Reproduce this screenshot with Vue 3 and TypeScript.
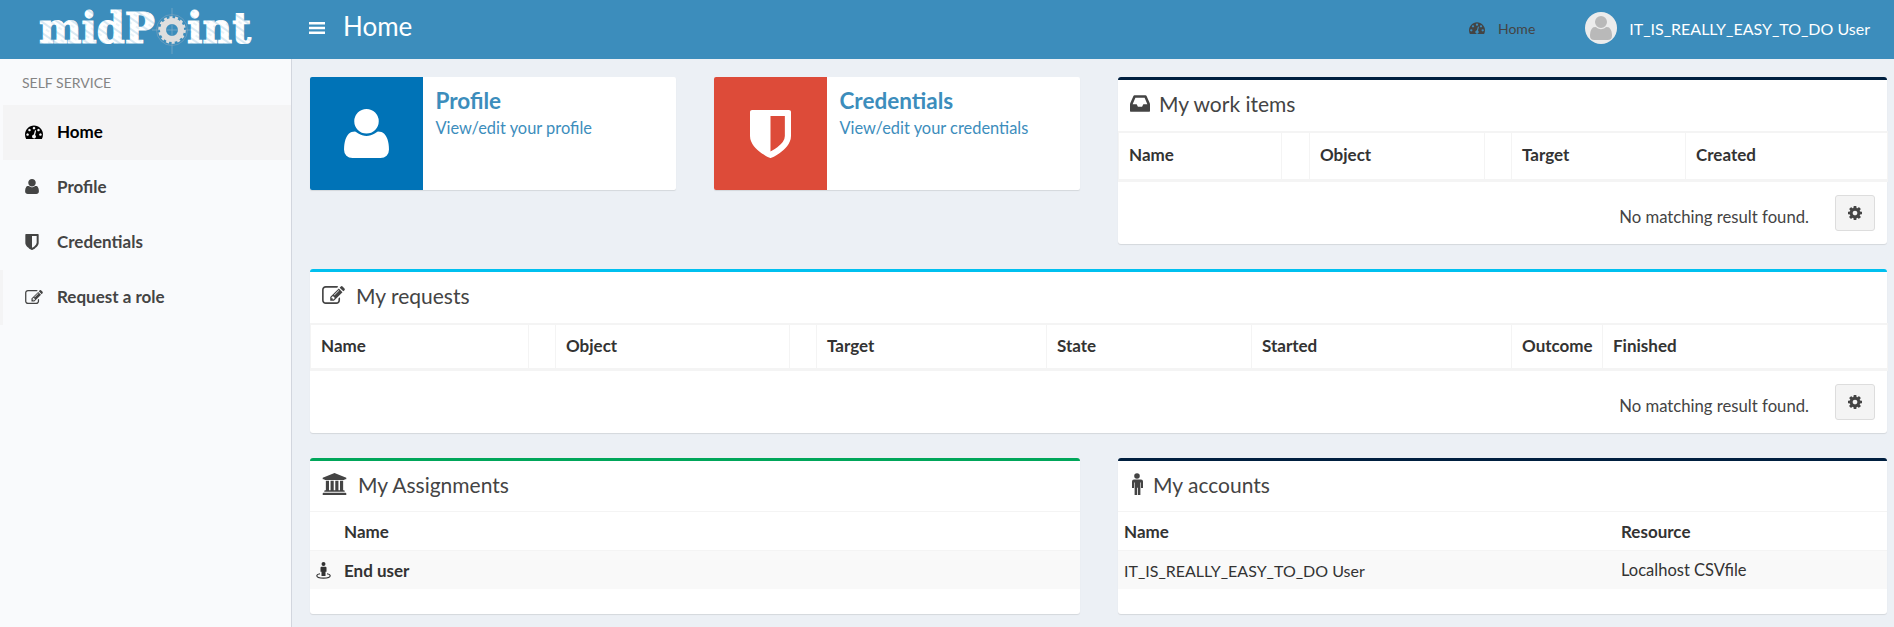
<script setup lang="ts">
const icons = {
  bars: 'M0 3h16v2.4H0zM0 7.8h16v2.4H0zM0 12.6h16V15H0z',
  user: 'M1600 1405q0 120-73 189.500t-194 69.500h-874q-121 0-194-69.500t-73-189.500q0-53 3.500-103.500t14-109 26.500-108.500 43-97.500 62-81 85.500-53.500 111.500-20q9 0 42 21.500t74.500 48 108 48 133.500 21.500 133.500-21.500 108-48 74.500-48 42-21.500q61 0 111.500 20t85.500 53.500 62 81 43 97.500 26.500 108.500 14 109 3.500 103.500zm-320-893q0 159-112.500 271.500t-271.500 112.500-271.500-112.500-112.500-271.500 112.500-271.500 271.500-112.500 271.500 112.500 112.500 271.500z',
  cog: 'M1152 896q0-106-75-181t-181-75-181 75-75 181 75 181 181 75 181-75 75-181zm512-109v222q0 12-8 23t-20 13l-185 28q-19 54-39 91 35 50 107 138 10 12 10 25t-9 23q-27 37-99 108t-94 71q-12 0-26-9l-138-108q-44 23-91 38-16 136-29 186-7 28-36 28h-222q-14 0-24.500-8.500t-11.500-21.500l-28-184q-49-16-90-37l-141 107q-10 9-25 9-14 0-25-11-126-114-165-168-7-10-7-23 0-12 8-23 15-21 51-66.500t54-70.500q-27-50-41-99l-183-27q-13-2-21-12.500t-8-23.500v-222q0-12 8-23t19-13l186-28q14-46 39-92-40-57-107-138-10-12-10-24 0-10 9-23 26-36 98.500-107.500t94.500-71.500q13 0 26 10l138 107q44-23 91-38 16-136 29-186 7-28 36-28h222q14 0 24.500 8.500t11.500 21.500l28 184q49 16 90 37l142-107q9-9 24-9 13 0 25 10 129 119 165 170 7 8 7 22 0 12-8 23-15 21-51 66.500t-54 70.500q26 50 41 98l183 28q13 2 21 12.500t8 23.500z',
  dashboard: 'M384 1152q0-53-37.500-90.500t-90.500-37.500-90.500 37.500-37.500 90.500 37.500 90.500 90.500 37.500 90.500-37.500 37.500-90.500zm192-448q0-53-37.500-90.500t-90.500-37.500-90.500 37.500-37.500 90.500 37.500 90.500 90.500 37.500 90.500-37.500 37.500-90.500zm428 481l101-382q6-26-7.500-48.500t-38.500-29.500-48 6.500-30 39.500l-101 382q-60 5-107 43.500t-63 98.500q-20 77 20 146t117 89 146-20 89-117q16-60-6-117t-72-91zm660-33q0-53-37.500-90.500t-90.500-37.500-90.500 37.500-37.500 90.500 37.500 90.500 90.500 37.500 90.500-37.500 37.500-90.500zm-640-640q0-53-37.500-90.500t-90.500-37.500-90.500 37.500-37.500 90.500 37.500 90.500 90.500 37.500 90.500-37.500 37.500-90.500zm448 192q0-53-37.500-90.500t-90.500-37.500-90.500 37.500-37.500 90.500 37.500 90.500 90.500 37.500 90.500-37.500 37.500-90.500zm320 448q0 261-141 483-19 29-54 29h-1402q-35 0-54-29-141-221-141-483 0-182 71-348t191-286 286-191 348-71 348 71 286 191 191 286 71 348z',
  shield: 'M1344 960v-640h-448v1137q119-63 213-137 235-184 235-360zm192-768v768q0 86-33.500 170.500t-83 150-118 127.500-126.500 103-121 77.500-89.500 49.500-42.500 20q-12 6-26 6t-26-6q-16-7-42.500-20t-89.500-49.500-121-77.500-126.500-103-118-127.500-83-150-33.500-170.500v-768q0-26 19-45t45-19h1152q26 0 45 19t19 45z',
  pencil: 'M888 1184l116-116-152-152-116 116v56h96v96h56zm440-720q-16-16-33 1l-350 350q-17 17-1 33t33-1l350-350q17-17 1-33zm80 594v190q0 119-84.500 203.500t-203.500 84.500h-832q-119 0-203.500-84.500t-84.500-203.500v-832q0-119 84.500-203.500t203.500-84.500h832q63 0 117 25 15 7 18 23 3 17-9 29l-49 49q-14 14-32 8-23-6-45-6h-832q-66 0-113 47t-47 113v832q0 66 47 113t113 47h832q66 0 113-47t47-113v-126q0-13 9-22l64-64q15-15 35-7t20 29zm-96-738l288 288-672 672h-288v-288zm444 132l-92 92-288-288 92-92q28-28 68-28t68 28l152 152q28 28 28 68t-28 68z',
  inbox: 'M1023 960h316q-1-3-2.500-8.500t-2.500-7.500l-212-496h-708l-212 496q-1 3-2.500 8.500t-2.500 7.500h316l95 192h320zm513 30v482q0 26-19 45t-45 19h-1408q-26 0-45-19t-19-45v-482q0-62 25-123l238-552q10-25 36.500-42t52.500-17h832q26 0 52.500 17t36.500 42l238 552q25 61 25 123z',
  bank: 'M960 0l960 384v128h-128q0 26-20.500 45t-48.500 19h-1526q-28 0-48.500-19t-20.500-45h-128v-128zm-704 640h256v768h128v-768h256v768h128v-768h256v768h128v-768h256v768h59q28 0 48.500 19t20.500 45v64h-1664v-64q0-26 20.500-45t48.500-19h59v-768zm1595 960q28 0 48.500 19t20.500 45v128h-1920v-128q0-26 20.500-45t48.500-19h1782z',
  male: 'M7 0.2a2.8 2.8 0 1 1 0 5.6a2.8 2.8 0 0 1 0-5.6zM3 6.5h8a2 2 0 0 1 2 2v6.500h-2v-5.500h-.6v12.500h-2.500v-7.300h-.8v7.300h-2.500v-12.500h-.6v5.500h-2v-6.500a2 2 0 0 1 2-2z',
}

const menu = [
  { label: 'Home', icon: icons.dashboard, vb: '0 256 1792 1280', w: 18, h: 14, active: true },
  { label: 'Profile', icon: icons.user, vb: '192 128 1408 1536', w: 14, h: 15 },
  { label: 'Credentials', icon: icons.shield, vb: '256 128 1280 1536', w: 14, h: 16 },
  { label: 'Request a role', icon: icons.pencil, vb: '0 128 1792 1408', w: 18, h: 14, edge: true },
]

const workCols = [
  { label: 'Name', w: 163 }, { label: '', w: 28 }, { label: 'Object', w: 175 },
  { label: '', w: 27 }, { label: 'Target', w: 174 }, { label: 'Created', w: 202 },
]
const requestCols = [
  { label: 'Name', w: 218 }, { label: '', w: 27 }, { label: 'Object', w: 234 },
  { label: '', w: 27 }, { label: 'Target', w: 230 }, { label: 'State', w: 205 },
  { label: 'Started', w: 260 }, { label: 'Outcome', w: 91 }, { label: 'Finished', w: 285 },
]
</script>

<template>
  <div class="app">
    <header class="top">
      <div class="brand">
        <svg class="logo" width="232" height="59" viewBox="0 0 232 59">
          <defs>
            <pattern id="hatch" width="9" height="9" patternUnits="userSpaceOnUse" patternTransform="rotate(35)">
              <rect width="9" height="9" fill="#fff" />
              <line x1="0" y1="2" x2="9" y2="2" stroke="#a9cde3" stroke-width="0.9" />
              <line x1="3" y1="6" x2="7" y2="6" stroke="#c8dfee" stroke-width="0.8" />
            </pattern>
          </defs>
          <text class="logo-text" x="9" y="43" textLength="116" lengthAdjust="spacingAndGlyphs" fill="url(#hatch)" stroke="url(#hatch)" stroke-width="1.200">midP</text>
          <g class="gear">
            <line x1="142" y1="8" x2="142" y2="54" stroke="#8fb3cb" stroke-width="0.6" />
            <line x1="122" y1="30" x2="163" y2="30" stroke="#8fb3cb" stroke-width="0.6" />
            <circle cx="142" cy="30" r="15.500" fill="none" stroke="#7fa5c0" stroke-width="0.6" />
            <circle cx="142" cy="30" r="9" fill="none" stroke="#dedede" stroke-width="6" />
            <circle cx="142" cy="30" r="12.500" fill="none" stroke="#dedede" stroke-width="2.600" stroke-dasharray="3 2.600" />
          </g>
          <text class="logo-text" x="157" y="43" textLength="64" lengthAdjust="spacingAndGlyphs" fill="url(#hatch)" stroke="url(#hatch)" stroke-width="1.200">int</text>
        </svg>
      </div>
      <svg class="bars" viewBox="0 0 16 18" width="16" height="18"><path :d="icons.bars" /></svg>
      <h1 class="page-title">Home</h1>
      <div class="crumb">
        <svg viewBox="0 256 1792 1280" width="16" height="12"><path :d="icons.dashboard" /></svg>
        <span>Home</span>
      </div>
      <div class="who">
        <span class="avatar">
          <svg viewBox="192 128 1408 1536" width="22" height="24"><path :d="icons.user" /></svg>
        </span>
        <span class="who-name">IT_IS_REALLY_EASY_TO_DO User</span>
      </div>
    </header>

    <div class="main">
      <aside class="side">
        <div class="side-head">SELF SERVICE</div>
        <a
          v-for="m in menu"
          :key="m.label"
          class="side-item"
          :class="{ active: m.active, edge: m.edge }"
        >
          <span class="side-ico">
            <svg :viewBox="m.vb" :width="m.w" :height="m.h"><path :d="m.icon" /></svg>
          </span>
          <span>{{ m.label }}</span>
        </a>
      </aside>

      <main class="content">
        <section class="row-top">
          <div class="info">
            <div class="info-ico blue">
              <svg viewBox="192 128 1408 1536" width="45" height="49"><path :d="icons.user" /></svg>
            </div>
            <div class="info-body">
              <div class="info-title">Profile</div>
              <div class="info-sub">View/edit your profile</div>
            </div>
          </div>
          <div class="info">
            <div class="info-ico red">
              <svg viewBox="256 128 1280 1536" width="41" height="48" preserveAspectRatio="none"><path :d="icons.shield" /></svg>
            </div>
            <div class="info-body">
              <div class="info-title">Credentials</div>
              <div class="info-sub">View/edit your credentials</div>
            </div>
          </div>
          <div class="panel navy">
            <div class="panel-head">
              <svg class="ph-ico" viewBox="0 256 1536 1280" width="20" height="17"><path :d="icons.inbox" /></svg>
              <h3 class="tight">My work items</h3>
            </div>
            <table class="grid bordered tall">
              <colgroup><col v-for="(c, i) in workCols" :key="i" :style="{ width: c.w + 'px' }" /></colgroup>
              <thead><tr><th v-for="(c, i) in workCols" :key="i">{{ c.label }}</th></tr></thead>
            </table>
            <div class="foot">
              <span>No matching result found.</span>
              <button class="gear-btn" type="button" aria-label="Settings">
                <svg viewBox="128 128 1536 1536" width="14" height="14"><path :d="icons.cog" /></svg>
              </button>
            </div>
          </div>
        </section>

        <section class="panel sky full">
          <div class="panel-head">
            <svg class="ph-ico" viewBox="0 128 1792 1408" width="23" height="18"><path :d="icons.pencil" /></svg>
            <h3 class="wide">My requests</h3>
          </div>
          <table class="grid bordered">
            <colgroup><col v-for="(c, i) in requestCols" :key="i" :style="{ width: c.w + 'px' }" /></colgroup>
            <thead><tr><th v-for="(c, i) in requestCols" :key="i">{{ c.label }}</th></tr></thead>
          </table>
          <div class="foot">
            <span>No matching result found.</span>
            <button class="gear-btn" type="button" aria-label="Settings">
              <svg viewBox="128 128 1536 1536" width="14" height="14"><path :d="icons.cog" /></svg>
            </button>
          </div>
        </section>

        <section class="row-bottom">
          <div class="panel green short">
            <div class="panel-head">
              <svg class="ph-ico" viewBox="0 0 1920 1792" width="25" height="22"><path :d="icons.bank" /></svg>
              <h3 class="wide">My Assignments</h3>
            </div>
            <table class="grid plain assign">
              <colgroup><col class="c-ico" /><col /></colgroup>
              <thead><tr><th></th><th>Name</th></tr></thead>
              <tbody>
                <tr>
                  <td class="ico-cell">
                    <svg viewBox="0 0 15 17" width="15" height="17">
                      <path d="M7.500 0a2 2 0 1 1 0 4a2 2 0 0 1 0-4zM5.500 4.800h4a1 1 0 0 1 1 1v4h-1v4.200h-4v-4.200h-1v-4a1 1 0 0 1 1-1z" />
                      <path d="M4 11.800C1.800 12.200.8 12.900.8 13.800c0 1.400 3 2.300 6.700 2.300s6.700-.9 6.700-2.300c0-.9-1-1.600-3.200-2" fill="none" stroke-width="1.100" />
                    </svg>
                  </td>
                  <td class="strong">End user</td>
                </tr>
              </tbody>
            </table>
          </div>
          <div class="panel navy short">
            <div class="panel-head">
              <svg class="ph-ico" viewBox="0 0 14 22" width="14" height="22"><path :d="icons.male" /></svg>
              <h3 class="tight">My accounts</h3>
            </div>
            <table class="grid plain accounts">
              <colgroup><col class="c-acc" /><col /></colgroup>
              <thead><tr><th>Name</th><th>Resource</th></tr></thead>
              <tbody>
                <tr><td>IT_IS_REALLY_EASY_TO_DO User</td><td class="res">Localhost CSVfile</td></tr>
              </tbody>
            </table>
          </div>
        </section>
      </main>
    </div>
  </div>
</template>

<style>
html, body { margin: 0; padding: 0; background: #ecf0f5; overflow: hidden; }
</style>

<style scoped>
.app {
  min-height: 100vh;
  display: flex;
  flex-direction: column;
  font-family: Lato, "Noto Sans", sans-serif;
  font-size: 16px;
  color: #333;
}
.top {
  height: 59px;
  flex: none;
  box-sizing: border-box;
  background: #3c8dbc;
  display: flex;
  align-items: center;
  color: #fff;
}
.brand { width: 309px; padding-left: 30px; box-sizing: border-box; height: 59px; }
.logo { display: block; }
.logo-text { font-family: "DejaVu Serif", serif; font-weight: 700; font-size: 42px; }
.bars { fill: #fff; margin-bottom: 4px; }
.page-title { margin: 0 0 8px 18px; font-size: 26px; font-weight: 400; flex: 1; }
.crumb { display: flex; align-items: center; gap: 13px; font-size: 14px; color: #444; fill: #444; margin: 0 50px 3px 0; }
.who { display: flex; align-items: center; gap: 12px; margin: 0 24px 3px 0; }
.avatar {
  width: 32px; height: 32px; border-radius: 50%; background: #ececec;
  display: flex; align-items: center; justify-content: center; overflow: hidden; fill: #b9b9b9;
}
.who-name { font-size: 16px; }

.main { flex: 1; display: flex; }
.side {
  width: 291px; flex: none; background: #f9fafc; border-right: 1px solid #d2d6de;
  padding-top: 11px;
}
.side-head { height: 35px; padding-left: 22px; font-size: 14px; line-height: 26px; color: #848484; }
.side-item {
  height: 55px; box-sizing: border-box; padding-bottom: 2px; display: flex; align-items: center;
  margin-left: 3px; font-size: 17px; font-weight: 700; color: #444; fill: #444;
}
.side-item.active { background: #f4f4f5; color: #000; fill: #000; }
.side-item.edge { margin-left: 0; border-left: 3px solid #f4f4f5; }
.side-ico { width: 54px; padding-left: 22px; box-sizing: border-box; display: flex; }

.content { flex: 1; min-width: 0; padding: 18px 7px 0 18px; }
.row-top { display: grid; grid-template-columns: 366px 366px 769px; column-gap: 38px; align-items: start; margin-bottom: 25px; }
.row-bottom { display: grid; grid-template-columns: 770px 769px; column-gap: 38px; }

.info {
  height: 113px; display: flex; background: #fff; border-radius: 2px;
  box-shadow: 0 1px 1px rgba(0, 0, 0, 0.1); overflow: hidden;
}
.info-ico { width: 113px; flex: none; display: flex; align-items: center; justify-content: center; fill: #fff; }
.blue { background: #0073b7; }
.red { background: #dd4b39; }
.info-body { padding: 10px 12.500px; color: #3c8dbc; }
.info-title { font-size: 22.500px; font-weight: 700; line-height: 28px; }
.info-sub { font-size: 16.400px; line-height: 26px; }

.panel {
  background: #fff; border-top: 3px solid #d2d6de; border-radius: 3px;
  box-shadow: 0 1px 1px rgba(0, 0, 0, 0.1);
}
.navy { border-top-color: #001f3f; }
.sky { border-top-color: #00c0ef; }
.green { border-top-color: #00a65a; }
.full { margin-bottom: 25px; }
.panel-head { height: 51px; box-sizing: border-box; padding: 0 0 4px 12px; display: flex; align-items: center; fill: #444; }
.panel-head h3 { margin: 0 0 0 10px; font-size: 21px; font-weight: 400; color: #444; }
.panel-head h3.wide { margin-left: 11px; }
.panel-head h3.tight { margin-left: 9px; }
.ph-ico { flex: none; }

.grid { width: 100%; table-layout: fixed; border-collapse: collapse; }
.grid th { font-weight: 700; text-align: left; color: #333; font-size: 17px; }
.bordered { border-top: 2px solid #f4f4f4; border-bottom: 3px solid #f4f4f4; }
.bordered th {
  height: 46px; padding: 0 0 2px 10px; box-sizing: border-box;
  border-left: 1px solid #f4f4f4; border-right: 1px solid #f4f4f4;
}
.tall th { height: 48px; }
.foot { height: 62px; display: flex; align-items: center; justify-content: flex-end; padding-right: 12px; color: #444; }
.foot > span { margin-right: 26px; margin-top: 8px; font-size: 16.700px; }
.gear-btn {
  width: 40px; height: 36px; padding: 0; border: 1px solid #ddd; border-radius: 3px; background: #f4f4f4;
  display: flex; align-items: center; justify-content: center; fill: #444;
}
.short { height: 156px; box-sizing: border-box; }
.short .panel-head { height: 50px; }
.plain { border-top: 1px solid #f4f4f4; }
.plain th { height: 38px; padding: 0; border-bottom: 1px solid #f4f4f4; }
.plain td { height: 38px; padding: 0; background: #f9f9f9; }
.c-ico { width: 34px; }
.c-acc { width: 496px; }
.accounts th, .accounts td { padding-left: 6px; }
.accounts th:last-child, .accounts td:last-child { padding-left: 7px; }
.res { font-size: 16.500px; }
.ico-cell { padding-left: 6px !important; fill: #333; stroke: #333; line-height: 0; }
.ico-cell path:first-child { stroke: none; }
.strong { font-weight: 700; font-size: 17px; }
</style>
